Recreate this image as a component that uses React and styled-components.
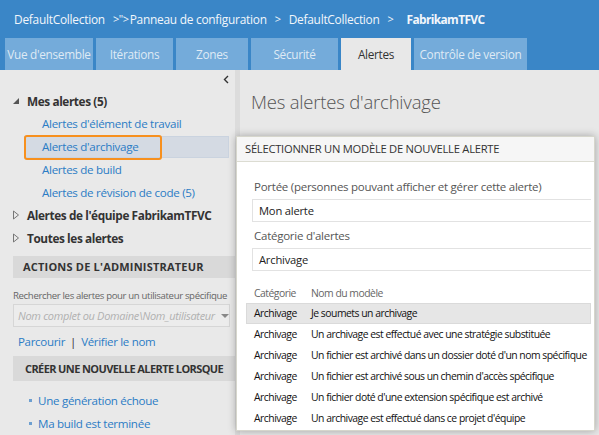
import React from 'react'
import styled, { createGlobalStyle } from 'styled-components'

const GlobalStyle = createGlobalStyle`
  *, *::before, *::after {
    box-sizing: border-box;
  }
  html, body {
    margin: 0;
    padding: 0;
    background: #e8e8e8;
  }
  body {
    font-family: 'Open Sans', 'Noto Sans', sans-serif;
    color: #333;
    line-height: 1.2;
  }
`

const Page = styled.div`
  width: 599px;
  height: 435px;
  overflow: hidden;
  display: flex;
  flex-direction: column;
  background: #e8e8e8;
`

const TopBar = styled.header`
  background: #3a86c7;
  display: flex;
  flex-direction: column;
`

const Breadcrumb = styled.div`
  height: 38px;
  display: flex;
  align-items: center;
  padding-left: 14px;
  font-size: 11.9px;
  color: #f2f6fb;
  white-space: nowrap;
`

const Crumb = styled.span`
  font-weight: ${p => (p.current ? 700 : 400)};
  letter-spacing: ${p => (p.current ? '-0.6px' : '-0.25px')};
`

const Sep = styled.span`
  font-size: 11px;
  letter-spacing: -0.4px;
  margin: 0 ${p => (p.right ?? 8)}px 0 8px;
`

const Tabs = styled.nav`
  display: flex;
  gap: 3px;
  padding-left: 5px;
  height: 32px;
`

const Tab = styled.div`
  width: ${p => p.w}px;
  display: flex;
  align-items: center;
  justify-content: center;
  font-size: 11.8px;
  letter-spacing: -0.3px;
  white-space: nowrap;
  background: ${p => (p.active ? '#e8e8e8' : '#74abda')};
  color: ${p => (p.active ? '#333' : '#dfeaf5')};
`

const Body = styled.div`
  flex: 1;
  display: grid;
  grid-template-columns: 235px 5px 1fr;
  min-height: 0;
`

const Side = styled.aside`
  background: #e9e9e9;
  display: flex;
  flex-direction: column;
  overflow: hidden;
`

const Collapse = styled.div`
  display: flex;
  justify-content: flex-end;
  align-items: flex-start;
  padding: 5px 6px 0 0;
  height: 20px;
`

const TreeHead = styled.div`
  display: flex;
  align-items: center;
  height: 23px;
  padding-left: 12px;
  font-size: 11.8px;
  font-weight: 700;
  color: #333;
  letter-spacing: -0.4px;
  white-space: nowrap;
`

const Arrow = styled.span`
  width: 15px;
  display: flex;
  align-items: center;
`

const TreeItem = styled.div`
  height: 23px;
  display: flex;
  align-items: center;
  margin: 0 6px 0 24px;
  padding-left: 17px;
  font-size: 11.6px;
  color: #2b7cc5;
  letter-spacing: -0.3px;
  position: relative;
  background: ${p => (p.selected ? '#d4dae3' : 'transparent')};
  border: 1px solid ${p => (p.selected ? '#cad3df' : 'transparent')};
  white-space: nowrap;
`

const Highlight = styled.span`
  position: absolute;
  left: -1px;
  top: -2px;
  width: 138px;
  height: 25px;
  border: 2px solid #f7901e;
  border-radius: 3px;
`

const Section = styled.div`
  margin: ${p => p.top}px 0 0 13px;
  height: ${p => p.h}px;
  background: #d9d9d9;
  display: flex;
  align-items: center;
  padding-left: ${p => p.pad}px;
  font-size: 11px;
  font-weight: 700;
  color: #333;
  letter-spacing: ${p => p.ls}px;
  white-space: nowrap;
`

const Hint = styled.div`
  margin: 11px 0 0 13px;
  height: 14px;
  line-height: 14px;
  font-size: 9.6px;
  color: #666;
  letter-spacing: -0.35px;
  white-space: nowrap;
`

const Combo = styled.div`
  margin: 1px 5px 0 13px;
  height: 23px;
  border: 1px solid #d6d6d6;
  background: #ececec;
  display: flex;
  align-items: center;
  justify-content: space-between;
  gap: 6px;
  padding: 0 5px 0 4px;
  font-size: 11px;
  font-style: italic;
  color: #b0b0b0;
  letter-spacing: -0.3px;
  white-space: nowrap;
  overflow: hidden;
`

const Caret = styled.span`
  flex: none;
  width: 0;
  height: 0;
  border-left: 4px solid transparent;
  border-right: 4px solid transparent;
  border-top: 4px solid #888;
`

const Links = styled.div`
  margin: 8px 0 0 18px;
  height: 14px;
  line-height: 14px;
  font-size: 11.5px;
  color: #2b7cc5;
  display: flex;
  gap: 5px;
  letter-spacing: -0.3px;
`

const Bar = styled.span`
  color: #333;
`

const Bullets = styled.div`
  margin-top: 8px;
`

const Bullet = styled.div`
  height: 23px;
  display: flex;
  align-items: center;
  padding-left: 29px;
  font-size: 11.6px;
  color: #2b7cc5;
  letter-spacing: -0.3px;
  &::before {
    content: '';
    width: 3px;
    height: 3px;
    background: #6d9fd0;
    margin-right: 6px;
  }
`

const Divider = styled.div`
  background: #dcdcdc;
`

const Main = styled.main`
  display: flex;
  flex-direction: column;
  min-width: 0;
`

const Title = styled.h1`
  margin: 20px 0 22px 11px;
  height: 24px;
  line-height: 24px;
  font-size: 18.5px;
  font-weight: 300;
  color: #555;
  letter-spacing: -0.2px;
`

const Dialog = styled.section`
  margin-left: -4px;
  width: 359px;
  background: #fff;
  border: 1px solid #d6d6cc;
  box-shadow: 0 0 8px rgba(0, 0, 0, 0.3);
`

const DialogHead = styled.div`
  height: 25px;
  background: #f6f6f6;
  border-bottom: 1px solid #dcdcd2;
  display: flex;
  align-items: center;
  padding-left: 8px;
  font-size: 11.2px;
  color: #333;
  letter-spacing: -0.25px;
  white-space: nowrap;
`

const DialogBody = styled.div`
  padding: 17px 3px 1px 9px;
`

const Label = styled.div`
  font-size: 11.5px;
  color: #555;
  padding-left: 8px;
  height: 16px;
  line-height: 16px;
  letter-spacing: -0.25px;
  white-space: nowrap;
`

const Field = styled.div`
  margin: 4px 0 6px 6px;
  height: 23px;
  border: 1px solid #e2e2e2;
  border-right: none;
  display: flex;
  align-items: center;
  padding-left: 6px;
  font-size: 11.2px;
  color: #222;
  letter-spacing: -0.2px;
`

const Table = styled.div`
  margin-top: 12px;
  display: flex;
  flex-direction: column;
`

const TRow = styled.div`
  display: grid;
  grid-template-columns: 57px 1fr;
  align-items: center;
  height: ${p => (p.head ? 20 : 21)}px;
  padding-left: 7px;
  font-size: 10.4px;
  letter-spacing: -0.5px;
  color: ${p => (p.head ? '#666' : '#111')};
  background: ${p => (p.selected ? '#e6e6e6' : 'transparent')};
  border: 1px solid ${p => (p.selected ? '#dadada' : 'transparent')};
  white-space: nowrap;
`

const tabs = [
  ['Vue d\'ensemble', 88],
  ['Itérations', 77],
  ['Zones', 72],
  ['Sécurité', 87],
  ['Alertes', 70, true],
  ['Contrôle de version', 113]
]

const templates = [
  'Je soumets un archivage',
  'Un archivage est effectué avec une stratégie substituée',
  'Un fichier est archivé dans un dossier doté d\'un nom spécifique',
  'Un fichier est archivé sous un chemin d\'accès spécifique',
  'Un fichier doté d\'une extension spécifique est archivé',
  'Un archivage est effectué dans ce projet d\'équipe'
]

const Triangle = ({ open }) =>
  open ? (
    <svg width="8" height="8" viewBox="0 0 8 8">
      <path d="M7 1 L7 7 L1 7 Z" fill="#555" />
    </svg>
  ) : (
    <svg width="8" height="10" viewBox="0 0 8 10">
      <path d="M1.5 1 L6.5 5 L1.5 9 Z" fill="none" stroke="#777" />
    </svg>
  )

const Chevron = () => (
  <svg width="6" height="9" viewBox="0 0 6 9">
    <path d="M5 1 L1.5 4.5 L5 8" fill="none" stroke="#333" strokeWidth="1.4" />
  </svg>
)

const App = () => (
  <Page>
    <GlobalStyle />
    <TopBar>
      <Breadcrumb>
        <Crumb>DefaultCollection</Crumb>
        <Sep right={1}>&gt;"&gt;</Sep>
        <Crumb>Panneau de configuration</Crumb>
        <Sep>&gt;</Sep>
        <Crumb>DefaultCollection</Crumb>
        <Sep right={13}>&gt;</Sep>
        <Crumb current>FabrikamTFVC</Crumb>
      </Breadcrumb>
      <Tabs>
        {tabs.map(([label, w, active]) => (
          <Tab key={label} w={w} active={active}>
            {label}
          </Tab>
        ))}
      </Tabs>
    </TopBar>
    <Body>
      <Side>
        <Collapse>
          <Chevron />
        </Collapse>
        <TreeHead>
          <Arrow>
            <Triangle open />
          </Arrow>
          Mes alertes (5)
        </TreeHead>
        <TreeItem>Alertes d'élément de travail</TreeItem>
        <TreeItem selected>
          <Highlight />
          Alertes d'archivage
        </TreeItem>
        <TreeItem>Alertes de build</TreeItem>
        <TreeItem>Alertes de révision de code (5)</TreeItem>
        <TreeHead>
          <Arrow>
            <Triangle />
          </Arrow>
          Alertes de l'équipe FabrikamTFVC
        </TreeHead>
        <TreeHead>
          <Arrow>
            <Triangle />
          </Arrow>
          Toutes les alertes
        </TreeHead>
        <Section top={6} h={23} pad={10} ls={0.2}>
          ACTIONS DE L'ADMINISTRATEUR
        </Section>
        <Hint>Rechercher les alertes pour un utilisateur spécifique</Hint>
        <Combo>
          Nom complet ou Domaine\Nom_utilisateur
          <Caret />
        </Combo>
        <Links>
          <span>Parcourir</span>
          <Bar>|</Bar>
          <span>Vérifier le nom</span>
        </Links>
        <Section top={7} h={25} pad={12} ls={-0.6}>
          CRÉER UNE NOUVELLE ALERTE LORSQUE
        </Section>
        <Bullets>
          <Bullet>Une génération échoue</Bullet>
          <Bullet>Ma build est terminée</Bullet>
        </Bullets>
      </Side>
      <Divider />
      <Main>
        <Title>Mes alertes d'archivage</Title>
        <Dialog>
          <DialogHead>SÉLECTIONNER UN MODÈLE DE NOUVELLE ALERTE</DialogHead>
          <DialogBody>
            <Label>Portée (personnes pouvant afficher et gérer cette alerte)</Label>
            <Field>Mon alerte</Field>
            <Label>Catégorie d'alertes</Label>
            <Field>Archivage</Field>
            <Table>
              <TRow head>
                <span>Catégorie</span>
                <span>Nom du modèle</span>
              </TRow>
              {templates.map((t, i) => (
                <TRow key={t} selected={i === 0}>
                  <span>Archivage</span>
                  <span>{t}</span>
                </TRow>
              ))}
            </Table>
          </DialogBody>
        </Dialog>
      </Main>
    </Body>
  </Page>
)

export default App
